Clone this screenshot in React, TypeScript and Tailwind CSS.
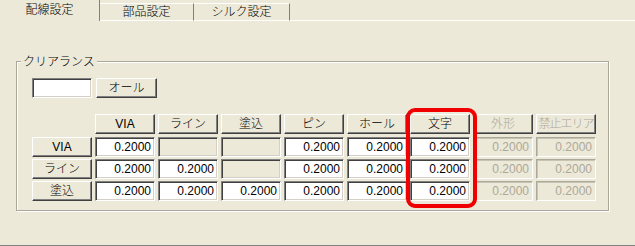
import React from "react";

const sunken =
  "border border-t-[#808080] border-l-[#808080] border-r-white border-b-white shadow-[inset_1px_1px_0_#404040,inset_-1px_-1px_0_#d4d0c8]";
const sunkenDisabled =
  "border border-t-[#aca899] border-l-[#aca899] border-r-white border-b-white shadow-[inset_1px_1px_0_#c8c4b4]";
const raised =
  "border border-t-white border-l-white border-r-[#404040] border-b-[#404040] shadow-[inset_-1px_-1px_0_#808080]";

type CellV = { v?: string; en: boolean; empty?: boolean };

function Cell({ v, en, empty }: CellV) {
  if (empty) {
    return <div className={`h-[20px] bg-[#ece9d8] ${sunken}`} />;
  }
  if (!en) {
    return (
      <div className={`h-[20px] bg-[#ece9d8] ${sunkenDisabled} flex items-center justify-end pr-[3px] text-[#aca899]`}>
        {v}
      </div>
    );
  }
  return (
    <div className={`h-[20px] bg-white ${sunken} flex items-center justify-end pr-[3px]`}>{v}</div>
  );
}

function Btn({ label, disabled, tight }: { label: string; disabled?: boolean; tight?: boolean }) {
  return (
    <div
      className={`h-[20px] bg-[#ece9d8] ${raised} flex items-center justify-center whitespace-nowrap overflow-hidden ${tight ? "tracking-[-1px]" : ""} ${disabled ? "text-[#aca899]" : "text-black"}`}
    >
      {label}
    </div>
  );
}

export default function App() {
  const headers = ["VIA", "ライン", "塗込", "ピン", "ホール", "文字", "外形", "禁止エリア"];
  const rows: { label: string; cells: CellV[] }[] = [
    {
      label: "VIA",
      cells: [
        { v: "0.2000", en: true },
        { en: false, empty: true },
        { en: false, empty: true },
        { v: "0.2000", en: true },
        { v: "0.2000", en: true },
        { v: "0.2000", en: true },
        { v: "0.2000", en: false },
        { v: "0.2000", en: false },
      ],
    },
    {
      label: "ライン",
      cells: [
        { v: "0.2000", en: true },
        { v: "0.2000", en: true },
        { en: false, empty: true },
        { v: "0.2000", en: true },
        { v: "0.2000", en: true },
        { v: "0.2000", en: true },
        { v: "0.2000", en: false },
        { v: "0.2000", en: false },
      ],
    },
    {
      label: "塗込",
      cells: [
        { v: "0.2000", en: true },
        { v: "0.2000", en: true },
        { v: "0.2000", en: true },
        { v: "0.2000", en: true },
        { v: "0.2000", en: true },
        { v: "0.2000", en: true },
        { v: "0.2000", en: false },
        { v: "0.2000", en: false },
      ],
    },
  ];

  return (
    <div className="relative w-[635px] h-[246px] overflow-hidden bg-[#ece9d8] text-[12px] leading-none text-black font-light font-['Liberation_Sans','Noto_Sans_CJK_JP',sans-serif]">
      {/* tabs */}
      <div className="flex h-[21px]">
        <div className="w-[100px] h-[21px] flex items-center justify-center pb-[1px] border-r border-r-[#808080]">
          配線設定
        </div>
        <div className="w-[94px] mt-[3px] flex items-center justify-center border-t border-t-white border-r border-r-[#808080] border-b border-b-white">
          部品設定
        </div>
        <div className="w-[96px] mt-[3px] flex items-center justify-center border-t border-t-white border-r border-r-[#808080] border-b border-b-white">
          シルク設定
        </div>
        <div className="flex-1 border-b border-b-white" />
      </div>

      {/* panel */}
      <div className="h-[225px] border-b border-b-[#808080] pl-[16px] pt-[40px]">
        <div className="relative w-[593px] h-[150px] border border-[#aca899] shadow-[inset_1px_1px_0_white,1px_1px_0_white] pl-[15px] pt-[16px]">
          <div className="absolute left-[4px] top-[-7px] px-[2px] bg-[#ece9d8] leading-[14px]">クリアランス</div>

          <div className="flex gap-[4px]">
            <div className={`w-[60px] h-[20px] bg-white ${sunken}`} />
            <div className="w-[61px]">
              <Btn label="オール" />
            </div>
          </div>

          <div className="mt-[16px] flex flex-col gap-[2px]">
            <div className="grid grid-cols-[60px_repeat(8,60px)] gap-x-[3px] mb-[1px]">
              <div />
              {headers.map((h, i) => (
                <Btn key={h} label={h} disabled={i >= 6} tight={i === 7} />
              ))}
            </div>
            {rows.map((r) => (
              <div key={r.label} className="grid grid-cols-[60px_repeat(8,60px)] gap-x-[3px]">
                <Btn label={r.label} />
                {r.cells.map((c, i) => (
                  <Cell key={i} {...c} />
                ))}
              </div>
            ))}
          </div>
        </div>
      </div>

      {/* red highlight */}
      <div className="absolute left-[406px] top-[108px] w-[71px] h-[100px] border-4 border-[#f00000] rounded-[9px] pointer-events-none" />
    </div>
  );
}
